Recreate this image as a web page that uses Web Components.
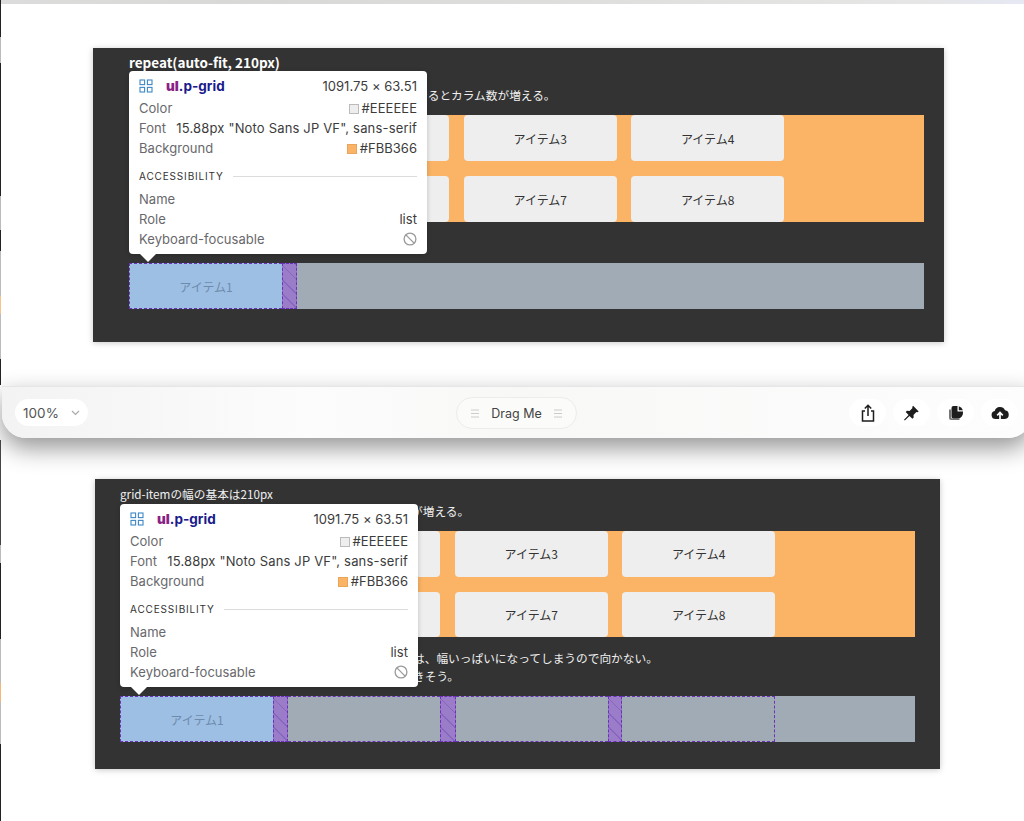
<!DOCTYPE html>
<html lang="ja">
<head>
<meta charset="utf-8">
<title>grid</title>
<style>
  html, body { margin: 0; padding: 0; background: #fff; }
  body { width: 1024px; height: 821px; overflow: hidden; font-family: "Noto Sans CJK JP", "Noto Sans", sans-serif; }
</style>
</head>
<body>
<demo-stage>
  <grid-panel style="--panel-left:93px; --panel-width:851px; --panel-height:294px; --panel-top:44px; --pad-left:36px; --pad-right:20px; --pad-top:5px">
    <panel-line bold>repeat(auto-fit, 210px)</panel-line>
    <panel-line style="--line-top:15px; --indent:287px">なるとカラム数が増える。</panel-line>
    <item-grid style="--grid-top:11px; --grid-height:107px">
      <grid-cell></grid-cell><grid-cell></grid-cell><grid-cell>アイテム3</grid-cell><grid-cell>アイテム4</grid-cell>
      <grid-cell></grid-cell><grid-cell></grid-cell><grid-cell>アイテム7</grid-cell><grid-cell>アイテム8</grid-cell>
    </item-grid>
    <grid-ruler tracks="153 15" style="--ruler-top:41px">アイテム1</grid-ruler>
    <inspect-tip style="--tip-left:36px; --tip-top:23px"></inspect-tip>
  </grid-panel>

  <bottom-toolbar></bottom-toolbar>

  <grid-panel style="--panel-left:95px; --panel-width:845px; --panel-height:290px; --panel-top:41px; --pad-left:25px; --pad-right:25px; --pad-top:6px">
    <panel-line>grid-itemの幅の基本は210px</panel-line>
    <panel-line style="--line-top:-1px; --indent:291px">が増える。</panel-line>
    <item-grid style="--grid-top:11px; --grid-height:106px">
      <grid-cell></grid-cell><grid-cell></grid-cell><grid-cell>アイテム3</grid-cell><grid-cell>アイテム4</grid-cell>
      <grid-cell></grid-cell><grid-cell></grid-cell><grid-cell>アイテム7</grid-cell><grid-cell>アイテム8</grid-cell>
    </item-grid>
    <panel-line style="--line-top:12px; --indent:293px">は、幅いっぱいになってしまうので向かない。</panel-line>
    <panel-line style="--indent:293px">きそう。</panel-line>
    <grid-ruler tracks="153 15 152 16 152 14 153" style="--ruler-top:11px">アイテム1</grid-ruler>
    <inspect-tip style="--tip-left:25px; --tip-top:25px"></inspect-tip>
  </grid-panel>
</demo-stage>

<script>
(function () {
  /* page frame, the screen edge on the left and the grey strip on top */
  class DemoStage extends HTMLElement {
    constructor() {
      super();
      this.attachShadow({ mode: "open" });
      this.shadowRoot.innerHTML = `
        <style>
        :host{
            display:block;
            position:relative;
            width:1024px;
            height:821px;
            overflow:hidden;
            background:#fff;
        }
        .strip{
            height:4px;
            background:linear-gradient(90deg,#dcdcdc 0%,#d8d8d6 25%,#dfdfdd 60%,#e6e6e6 90%,#e6e8f4 100%);
        }
        .edge{
            position:absolute;
            left:0;
            top:0;
            width:1px;
            height:821px;
            z-index:5;
            background:linear-gradient(180deg,
              #222 0 37px,#bbb 37px 63px,#222 63px 196px,#bbb 196px 230px,#222 230px 251px,
              #bbb 251px 296px,#f3c48f 296px 314px,#bbb 314px 359px,#222 359px 385px,
              transparent 385px 440px,#444 440px 545px,#bbb 545px 563px,#222 563px 639px,
              #bbb 639px 683px,#f3b878 683px 702px,#bbb 702px 744px,#222 744px 821px);
        }
        </style>
        <div class="strip"></div>
        <div class="edge"></div>
        <slot></slot>
      `;
    }
  }

  class GridPanel extends HTMLElement {
    constructor() {
      super();
      this.attachShadow({ mode: "open" });
      this.shadowRoot.innerHTML = `
        <style>
        :host{
            display:block;
            position:relative;
            box-sizing:border-box;
            margin-left:var(--panel-left);
            margin-top:var(--panel-top);
            width:var(--panel-width);
            height:var(--panel-height);
            padding:var(--pad-top) var(--pad-right) 0 var(--pad-left);
            background:#333333;
            box-shadow:0 1px 6px rgba(0,0,0,.22);
            font-family:"Noto Sans CJK JP","Noto Sans",sans-serif;
        }
        </style>
        <slot></slot>
      `;
    }
  }

  class PanelLine extends HTMLElement {
    constructor() {
      super();
      this.attachShadow({ mode: "open" });
      this.shadowRoot.innerHTML = `
        <style>
        :host{
            display:block;
            margin-top:var(--line-top,0);
            padding-left:var(--indent,0);
            height:18px;
            line-height:18px;
            font-size:11.7px;
            color:#f0f0f0;
            white-space:nowrap;
        }
        :host([bold]){
            font-size:13.5px;
            font-weight:700;
            color:#fff;
        }
        </style>
        <slot></slot>
      `;
    }
  }

  class ItemGrid extends HTMLElement {
    constructor() {
      super();
      this.attachShadow({ mode: "open" });
      this.shadowRoot.innerHTML = `
        <style>
        :host{
            display:grid;
            grid-template-columns:repeat(auto-fill,153px);
            grid-template-rows:1fr 1fr;
            column-gap:14.4px;
            row-gap:15px;
            margin-top:var(--grid-top);
            height:var(--grid-height);
            background:#fbb366;
        }
        </style>
        <slot></slot>
      `;
    }
  }

  class GridCell extends HTMLElement {
    constructor() {
      super();
      this.attachShadow({ mode: "open" });
      this.shadowRoot.innerHTML = `
        <style>
        :host{
            display:flex;
            align-items:center;
            justify-content:center;
            background:#eeeeee;
            border-radius:4px;
            font-size:12px;
            color:#333;
        }
        </style>
        <slot></slot>
      `;
    }
  }

  /* grey grid overlay row, odd tracks are items and even tracks are gaps */
  class GridRuler extends HTMLElement {
    constructor() {
      super();
      this.attachShadow({ mode: "open" });
      this.shadowRoot.innerHTML = `
        <style>
        :host{
            display:flex;
            box-sizing:border-box;
            margin-top:var(--ruler-top);
            height:46px;
            background:#a1abb6;
            font-size:12px;
            color:#6f8bac;
        }
        .track{
            box-sizing:border-box;
            flex:none;
            border-top:1px dashed #6b34b8;
            border-bottom:1px dashed #6b34b8;
        }
        .first{
            display:flex;
            align-items:center;
            justify-content:center;
            background:#9dbfe4;
            border-left:1px dashed #6b34b8;
        }
        .gap{
            border-left:1px dashed #6b34b8;
            border-right:1px dashed #6b34b8;
            background:
              repeating-linear-gradient(45deg,transparent 0 9px,rgba(90,50,170,.3) 9px 10px),
              #9a7cc8;
        }
        .last{
            border-right:1px dashed #6b34b8;
        }
        </style>
        <div id="tracks" style="display:contents"></div>
        <slot style="display:none"></slot>
      `;
    }

    connectedCallback() {
      const box = this.shadowRoot.getElementById("tracks");
      const sizes = (this.getAttribute("tracks") || "").split(" ");
      let html = "";
      sizes.forEach((size, index) => {
        let cls = "track";
        if (index === 0) cls += " first";
        if (index % 2 === 1) cls += " gap";
        if (index === sizes.length - 1) cls += " last";
        html += `<div class="${cls}" style="width:${size}px">${index === 0 ? this.textContent : ""}</div>`;
      });
      box.innerHTML = html;
    }
  }

  class InspectTip extends HTMLElement {
    constructor() {
      super();
      this.attachShadow({ mode: "open" });
      this.shadowRoot.innerHTML = `
        <style>
        :host{
            display:block;
            position:absolute;
            left:var(--tip-left);
            top:var(--tip-top);
            z-index:2;
            box-sizing:border-box;
            width:298px;
            height:183px;
            padding:5px 10px 0;
            background:#fff;
            border-radius:4px;
            box-shadow:0 1px 5px rgba(0,0,0,.2);
            font-family:Inter,"Noto Sans",sans-serif;
            font-size:13px;
            letter-spacing:.04px;
            color:#3c3c3c;
        }
        :host::after{
            content:"";
            position:absolute;
            left:11px;
            bottom:-8px;
            border-left:8px solid transparent;
            border-right:8px solid transparent;
            border-top:8px solid #fff;
        }
        .row{
            display:flex;
            align-items:center;
            justify-content:space-between;
            height:20px;
            line-height:20px;
            white-space:nowrap;
        }
        .label{
            color:#68686c;
        }
        .head{
            height:20px;
            margin-bottom:2px;
        }
        .tag{
            display:flex;
            align-items:center;
            gap:13px;
            font-size:13.5px;
            font-weight:700;
            color:#1a1a8c;
        }
        .tag b{
            color:#8a1f86;
        }
        .swatch{
            display:inline-block;
            box-sizing:border-box;
            width:10px;
            height:10px;
            margin-right:3px;
            border:1px solid #bbb;
            vertical-align:-1px;
        }
        .font{
            letter-spacing:.17px;
        }
        .section{
            display:flex;
            align-items:center;
            gap:9px;
            margin-top:8px;
            margin-bottom:3px;
            height:20px;
            font-size:10px;
            letter-spacing:.85px;
            color:#333;
        }
        .section i{
            flex:1;
            height:1px;
            background:#dcdcdc;
        }
        svg{
            display:block;
        }
        </style>
        <div class="row head">
          <span class="tag">
            <svg width="14" height="14" viewBox="0 0 14 14" fill="none" stroke="#3f87c6" stroke-width="1.1">
              <rect x="1" y="1" width="4.6" height="4.6"/><rect x="8.4" y="1" width="4.6" height="4.6"/>
              <rect x="1" y="8.4" width="4.6" height="4.6"/><rect x="8.4" y="8.4" width="4.6" height="4.6"/>
            </svg>
            <span><b>ul</b>.p-grid</span>
          </span>
          <span>1091.75 × 63.51</span>
        </div>
        <div class="row"><span class="label">Color</span><span><span class="swatch" style="background:#eeeeee"></span>#EEEEEE</span></div>
        <div class="row"><span class="label">Font</span><span class="font">15.88px "Noto Sans JP VF", sans-serif</span></div>
        <div class="row"><span class="label">Background</span><span><span class="swatch" style="background:#fbb366;border-color:#e9a55c"></span>#FBB366</span></div>
        <div class="section"><span>ACCESSIBILITY</span><i></i></div>
        <div class="row"><span class="label">Name</span></div>
        <div class="row"><span class="label">Role</span><span>list</span></div>
        <div class="row"><span class="label">Keyboard-focusable</span>
          <svg width="14" height="14" viewBox="0 0 14 14" fill="none" stroke="#9a9a9a" stroke-width="1.3">
            <circle cx="7" cy="7" r="5.9"/><path d="M2.9 2.9l8.2 8.2"/>
          </svg>
        </div>
      `;
    }
  }

  class BottomToolbar extends HTMLElement {
    constructor() {
      super();
      this.attachShadow({ mode: "open" });
      this.shadowRoot.innerHTML = `
        <style>
        :host{
            display:flex;
            position:relative;
            z-index:3;
            align-items:center;
            box-sizing:border-box;
            margin-top:44px;
            margin-left:2px;
            width:1030px;
            height:52px;
            padding:0 12px 0 13px;
            background:linear-gradient(90deg,#f3f3f3 0%,#fcfcfc 30%,#f8f8f7 50%,#fdfdfd 100%);
            border-top:1px solid #e6e6e6;
            border-radius:0 0 24px 24px;
            box-shadow:0 10px 24px rgba(0,0,0,.42);
            font-family:Inter,"Noto Sans",sans-serif;
        }
        .pill{
            display:flex;
            align-items:center;
            justify-content:center;
            box-sizing:border-box;
            height:27px;
            background:#fff;
            border-radius:14px;
        }
        .zoom{
            width:73px;
            gap:12px;
            font-size:13.5px;
            color:#555;
        }
        .drag{
            position:absolute;
            left:454px;
            top:10px;
            width:121px;
            height:32px;
            gap:12px;
            border-radius:16px;
            background:#fbfbfa;
            border:1px solid #ececec;
            font-size:12.5px;
            color:#444;
        }
        .tools{
            display:flex;
            gap:7px;
            margin-left:auto;
            margin-right:2px;
        }
        .tools .pill{
            width:37px;
        }
        svg{
            display:block;
        }
        </style>
        <div class="pill zoom">
          <span>100%</span>
          <svg width="9" height="6" viewBox="0 0 9 6" fill="none" stroke="#aaa" stroke-width="1.2"><path d="M1 1l3.5 3.5L8 1"/></svg>
        </div>
        <div class="pill drag">
          <svg width="8" height="9" viewBox="0 0 8 9" stroke="#ccc"><path d="M0 1h8M0 4.500h8M0 8h8"/></svg>
          <span>Drag Me</span>
          <svg width="8" height="9" viewBox="0 0 8 9" stroke="#ccc"><path d="M0 1h8M0 4.500h8M0 8h8"/></svg>
        </div>
        <div class="tools">
          <div class="pill">
            <svg width="14" height="18" viewBox="0 0 14 18" fill="none" stroke="#1d1d1d" stroke-width="1.5">
              <path d="M4 7H1.500v10h11V7H10"/><path d="M7 12V1.500M3.800 4.500L7 1.300l3.200 3.200"/>
            </svg>
          </div>
          <div class="pill">
            <svg width="17" height="16" viewBox="0 0 16 16" fill="#1d1d1d">
              <path d="M9.600 .8l5.600 5.600-1.300.9-1-.3-2.900 2.900.2 2.700-1.300 1.200-2.900-2.900L1.300 15.500l-.8-.8 4.600-4.700-2.900-2.900 1.200-1.300 2.700.2 2.900-2.900-.3-1z"/>
            </svg>
          </div>
          <div class="pill">
            <svg width="16" height="16" viewBox="0 0 16 16">
              <path d="M1 4.500h2v7.500a1.500 1.500 0 0 0 1.500 1.500h7v1.500H3a2 2 0 0 1-2-2z" fill="#777"/>
              <path d="M3.500 3a2 2 0 0 1 2-2h4v5.500h5.500V8a5.500 5.500 0 0 1-5.500 5.500h-4a2 2 0 0 1-2-2z" fill="#1d1d1d"/>
              <path d="M10.800 1.200a6 6 0 0 1 4.100 4.100h-4.100z" fill="#1d1d1d"/>
            </svg>
          </div>
          <div class="pill">
            <svg width="18" height="13" viewBox="0 0 18 13">
              <path d="M4.500 13A4 4 0 0 1 3.700 5.100 5.500 5.500 0 0 1 14 4.300 4.400 4.400 0 0 1 14 13z" fill="#1d1d1d"/>
              <path d="M9 13V7M6.200 9.300L9 6.500l2.800 2.800" fill="none" stroke="#fff" stroke-width="1.700"/>
            </svg>
          </div>
        </div>
      `;
    }
  }

  customElements.define("demo-stage", DemoStage);
  customElements.define("grid-panel", GridPanel);
  customElements.define("panel-line", PanelLine);
  customElements.define("item-grid", ItemGrid);
  customElements.define("grid-cell", GridCell);
  customElements.define("grid-ruler", GridRuler);
  customElements.define("inspect-tip", InspectTip);
  customElements.define("bottom-toolbar", BottomToolbar);
})();
</script>
</body>
</html>
